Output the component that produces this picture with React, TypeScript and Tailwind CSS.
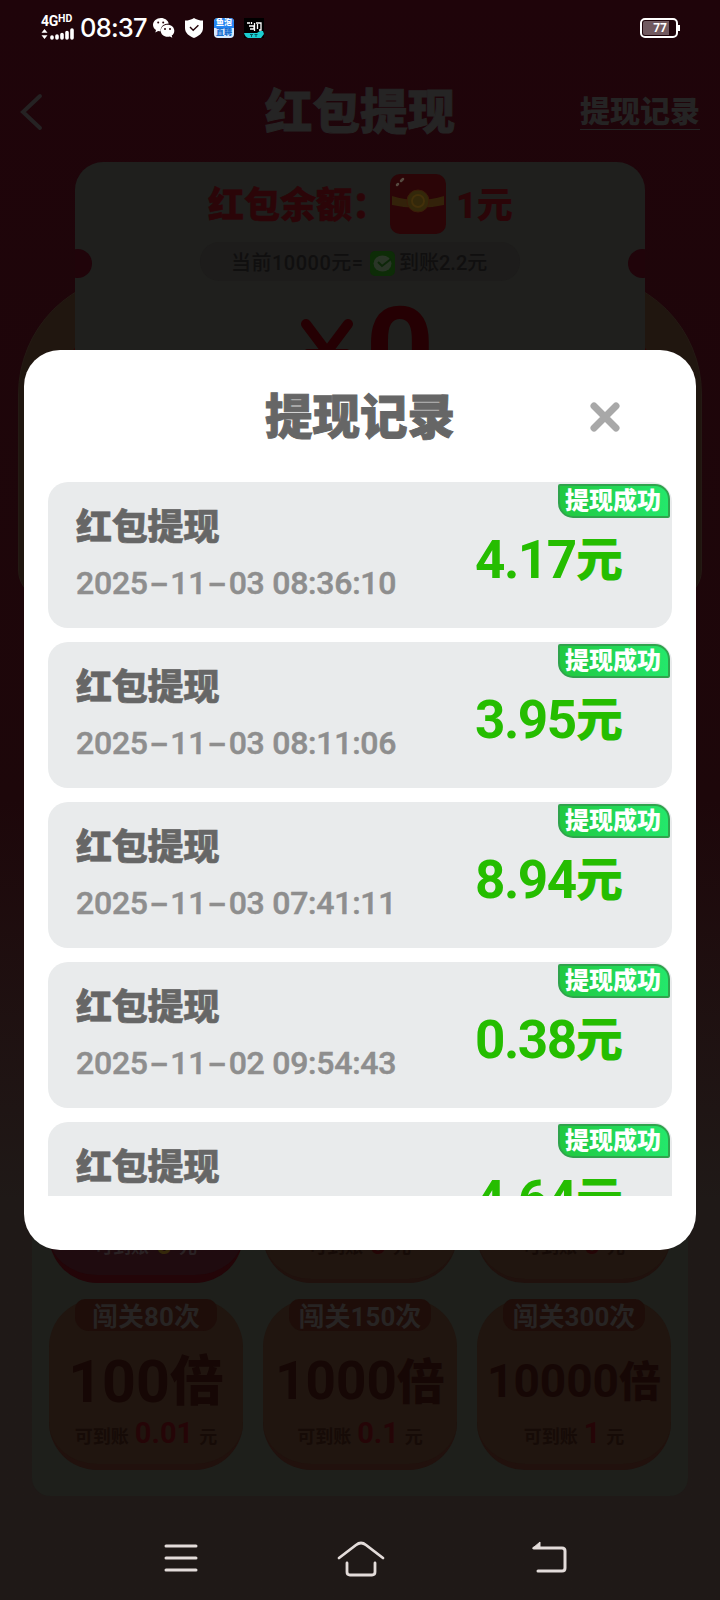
import React from "react";

const font = "font-['Roboto','Noto_Sans_CJK_SC',sans-serif]";

const records = [
  { time: ["2025", "11", "03 08:36:10"], amount: "4.17" },
  { time: ["2025", "11", "03 08:11:06"], amount: "3.95" },
  { time: ["2025", "11", "03 07:41:11"], amount: "8.94" },
  { time: ["2025", "11", "02 09:54:43"], amount: "0.38" },
  { time: ["2025", "11", "02 09:31:25"], amount: "4.64" },
];

const levels = [
  { tab: "闯关80次", times: "100", size: "text-[59px]", cjk: "text-[54px]", value: "0.01" },
  { tab: "闯关150次", times: "1000", size: "text-[53px]", cjk: "text-[48px]", value: "0.1" },
  { tab: "闯关300次", times: "10000", size: "text-[46px]", cjk: "text-[42px]", value: "1" },
];

function Dash() {
  return <span className="inline-block w-[22.5px] scale-x-[1.75] text-center tracking-normal">-</span>;
}

function StatusBar() {
  return (
    <div className="flex h-[56px] items-center pl-[41px] pr-[40px] text-white">
      <div className="flex w-[34px] flex-col">
        <div className="flex h-[11px] items-center text-[14px] font-bold leading-none tracking-[-0.3px]">
          4G<span className="mb-[3px] text-[10.500px] tracking-normal">HD</span>
        </div>
        <svg width="33" height="13" viewBox="0 0 33 13" className="mt-px">
          <path d="M.5 4.800 3.500 1l3 3.800zM.5 7.300h6l-3 3.700z" fill="#fff" />
          <path d="M11 10V9M16 10V8M21 10V6.500M26 10V4.500M31 10V2" stroke="#fff" strokeWidth="3.600" strokeLinecap="round" />
        </svg>
      </div>
      <span className="ml-[5px] w-[67px] whitespace-nowrap font-['Inter',sans-serif] text-[25.500px] font-medium leading-none tracking-[-0.800px]">08:37</span>
      <svg width="22" height="20" viewBox="0 0 22 20" className="ml-[6px]">
        <path d="M8 0C3.600 0 0 3 0 6.800 0 9 1.100 10.800 3 12l-.7 2.400 2.800-1.500c.8.2 1.700.3 2.600.3C7.200 8.600 11 5.600 15.800 5.600 15 2.300 11.800 0 8 0z" fill="#fff" />
        <path d="M14.600 6.700c-3.800 0-6.900 2.600-6.900 6s3.100 6 6.900 6c.8 0 1.600-.1 2.300-.3l2.400 1.300-.6-2.100c1.700-1.200 2.600-2.900 2.600-4.900 0-3.400-2.900-6-6.700-6z" fill="#fff" />
        <g fill="#250409"><circle cx="5.200" cy="4.500" r="1" /><circle cx="10.200" cy="4.500" r="1" /><circle cx="12" cy="11" r="1" /><circle cx="17" cy="11" r="1" /></g>
      </svg>
      <svg width="18" height="20" viewBox="0 0 18 20" className="ml-[10px]">
        <path d="M9 0c2 1.500 5.500 2.600 9 2.600V10c0 5-4 8-9 10-5-2-9-5-9-10V2.600C3.500 2.600 7 1.500 9 0z" fill="#fff" />
        <path d="m5 9 3.200 3.300 5.200-5" fill="none" stroke="#250409" strokeWidth="1.400" />
      </svg>
      <div className="ml-[11px] flex h-[20px] w-[20px] flex-col overflow-hidden rounded-[4px] bg-[#d6eaff] text-center text-[8px] font-black leading-[10px]">
        <span className="h-[10px] bg-[#2384f0] text-white">鱼泡</span>
        <span className="h-[10px] text-[#176ed0]">直聘</span>
      </div>
      <svg width="20" height="20" viewBox="0 0 20 20" className="ml-[10px]">
        <rect width="20" height="20" fill="#000" />
        <path d="M3 5h3M7.500 4v2M5 8h5v3H6M10.500 5v8M12 5h5v7h-2M13.500 6v5" fill="none" stroke="#fff" strokeWidth="1.300" />
        <path d="M0 15h13l3-2h3l1 3-3 4H4q-3-1-4-5z" fill="#1bcdd0" />
        <path d="M6 16.500h3M7.500 16.500V19M10.500 16.500h3M12 16.500V19" stroke="#075a60" />
      </svg>
      <div className="ml-auto flex items-center">
        <div className="flex h-[20px] w-[38px] items-center rounded-[5px] border-2 border-white p-px">
          <div className="flex h-full w-[26px] items-center justify-end rounded-l-[2px] bg-[#715a60] pr-[2px] text-[12px] font-bold text-white">77</div>
        </div>
        <div className="h-[6px] w-[2px] bg-white" />
      </div>
    </div>
  );
}

function Ticket() {
  return (
    <div className="relative mx-auto h-[438px] w-[684px]">
      <div className="absolute inset-x-0 top-[112px] h-[326px] overflow-hidden rounded-t-[120px] rounded-b-[30px] border border-[#241a14] bg-[#20160f]">
        <div className="mx-auto mt-[34px] h-[300px] w-[612px] rounded-t-[100px] bg-[#2d0504]" />
      </div>
      <div className="relative mx-auto flex h-[400px] w-[570px] flex-col items-center overflow-hidden rounded-t-[28px] bg-[#1f1f1d]">
        <div className="absolute left-[-12px] top-[87px] h-[29px] w-[29px] rounded-full bg-[#20040a]" />
        <div className="absolute right-[-12px] top-[87px] h-[29px] w-[29px] rounded-full bg-[#20040a]" />
        <div className="flex h-[80px] w-full items-center pl-[133px] pt-[7px] text-[36px] font-black leading-none text-[#2b0508]">
          <span className="w-[182px] whitespace-nowrap [-webkit-text-stroke:0.5px]">红包余额：</span>
          <svg width="56" height="60" viewBox="0 0 56 60" className="-mt-[3px]">
            <rect width="56" height="60" rx="10" fill="#2b0507" />
            <path d="M2 22q26 8 52 0v9q-26 6-52 0z" fill="#33220a" />
            <circle cx="28" cy="27" r="11" fill="#33280a" stroke="#3b1c09" />
            <circle cx="28" cy="27" r="6" fill="none" stroke="#43300a" strokeWidth="2" />
            <path d="m7 11 1-1m3-3 2-2" stroke="#55493f" strokeWidth="2.500" strokeLinecap="round" />
          </svg>
          <span className="ml-[10px] whitespace-nowrap">1元</span>
        </div>
        <div className="flex h-[39px] w-[320px] items-center rounded-full bg-[#1d1c1b] pl-[31px] pt-[3px] text-[20px] font-medium text-[#100f0f]">
          <span className="w-[139px] whitespace-nowrap tracking-[0.500px]">当前10000元=</span>
          <svg width="25" height="25" viewBox="0 0 25 25">
            <rect width="25" height="25" rx="5" fill="#0d2c07" />
            <ellipse cx="12.500" cy="12.500" rx="9" ry="8" fill="#2a3527" />
            <path d="m8 11 4 4 9-7" fill="none" stroke="#0d2709" strokeWidth="2" />
          </svg>
          <span className="ml-[4px] whitespace-nowrap">到账2.2元</span>
        </div>
        <div className="mt-[14px] flex h-[110px] items-center pl-[14px] text-[#250003]">
          <svg width="54" height="64" viewBox="0 0 54 64" className="mt-[0px]">
            <path d="M6 6l21 28L48 6M8 36h38M27 34v28M8 50h38" fill="none" stroke="#250003" strokeWidth="10" strokeLinecap="round" />
          </svg>
          <span className="ml-[12px] mt-[4px] text-[120px] font-bold leading-none">0</span>
        </div>
      </div>
    </div>
  );
}

function Levels() {
  return (
    <div className="mx-[32px] mt-[508px] flex h-[388px] shrink-0 flex-col rounded-b-[18px] bg-[#1e1f1b] px-[17px]">
      <div className="flex h-[175px] shrink-0 gap-[20px]">
        {["one", "two", "three"].map((key, i) => (
          <div
            key={key}
            className={`flex flex-1 items-end justify-center gap-[7px] rounded-b-[48px] text-[18px] font-bold leading-[22px] ${
              i === 0 ? "border-b-[8px] border-[#230508] bg-[#1f0b0f] pb-[17px] text-[#2a2224]" : "border-b-[4px] border-[#20110d] bg-[#20150f] pb-[21px] text-[#160b07]"
            }`}
          >
            <span>可到账</span>
            <span className={i === 0 ? "text-[28px] leading-[26px] text-[#35280a]" : "text-[28px] leading-[26px] text-[#240506]"}>0</span>
            <span>元</span>
          </div>
        ))}
      </div>
      <div className="mt-[16px] flex gap-[20px]">
        {levels.map((l) => (
          <div key={l.tab} className="flex h-[171px] flex-1 flex-col items-center rounded-[48px] border-b-[6px] border-[#21110d] bg-[#20150f]">
            <div className="flex h-[32px] w-[142px] items-center justify-center whitespace-nowrap rounded-b-[14px] rounded-t-[10px] bg-[#1e0d09] pt-[3px] text-[26px] font-bold leading-none text-[#272423]">
              {l.tab}
            </div>
            <div className={`mt-[20px] flex h-[60px] items-center whitespace-nowrap font-bold leading-none text-[#160705] ${l.size}`}>
              {l.times}
              <span className={`mt-[4px] font-black ${l.cjk}`}>倍</span>
            </div>
            <div className="mt-[9px] flex h-[28px] items-end gap-[6px] text-[18px] font-bold leading-[22px] text-[#160b07]">
              <span>可到账</span>
              <span className="text-[29px] leading-[30px] text-[#250507]">{l.value}</span>
              <span>元</span>
            </div>
          </div>
        ))}
      </div>
    </div>
  );
}

function RecordCard({ time, amount }: { time: string[]; amount: string }) {
  return (
    <div className="flex h-[146px] shrink-0 justify-between rounded-[20px] bg-[#e9ebec]">
      <div className="flex flex-col whitespace-nowrap pl-[28px] pt-[27px]">
        <div className="text-[36px] font-black leading-[38px] tracking-[-0.200px] text-[#666] [-webkit-text-stroke:0.6px]">红包提现</div>
        <div className="mt-[17px] text-[32px] font-medium leading-[38px] tracking-[-0.250px] text-[#8e8e8e] [-webkit-text-stroke:0.5px]">
          {time[0]}<Dash />{time[1]}<Dash />{time[2]}
        </div>
      </div>
      <div className="flex w-[200px] flex-col">
        <div className="ml-auto mr-[2px] mt-[2px] flex h-[34px] w-[112px] items-center justify-center whitespace-nowrap rounded-bl-[15px] rounded-br-[2px] rounded-tl-[2px] rounded-tr-[15px] border-2 border-[#30a34d] bg-linear-to-r from-[#21c83f] to-[#24e86b] pr-[2px] text-[24px] font-black leading-none text-white">
          提现成功
        </div>
        <div className="mt-[14px] flex h-[54px] items-center whitespace-nowrap pl-[3px] text-[53px] font-bold leading-none text-[#25bd00]">
          <span className="mt-[2px] w-[101px] tracking-[-1.500px]">{amount}</span>
          <span className="text-[47px] font-black">元</span>
        </div>
      </div>
    </div>
  );
}

export default function App() {
  return (
    <div className={`relative flex h-[1600px] w-[720px] flex-col overflow-hidden bg-linear-to-b from-[#1f040a] via-[#1d070a] to-[#1f1917] to-75% ${font}`}>
      <StatusBar />
      <div className="flex h-[106px] items-center pl-[20px] pr-[20px] text-[#252424]">
        <svg width="24" height="38" viewBox="0 0 24 38" fill="none" stroke="#252223" strokeWidth="4" strokeLinecap="round" className="mt-[5px]">
          <path d="M20 3 3 19l17 16" />
        </svg>
        <div className="ml-[221px] mt-[10px] w-[190px] whitespace-nowrap text-[47.500px] font-black leading-none [-webkit-text-stroke:1px]">红包提现</div>
        <div className="ml-auto mt-[6px] border-b border-[#252424] text-[30px] font-black leading-[34px]">提现记录</div>
      </div>
      <Ticket />
      <Levels />
      <div className="absolute left-[24px] top-[350px] flex h-[900px] w-[672px] flex-col rounded-[36px] bg-white px-[24px]">
        <div className="flex h-[132px] items-center pl-[217px]">
          <div className="mt-[6px] w-[190px] whitespace-nowrap text-[47.500px] font-black leading-none text-[#666] [-webkit-text-stroke:1px]">提现记录</div>
          <svg width="30" height="30" viewBox="0 0 30 30" className="ml-[135px] mt-[2px]">
            <path d="M4 4l22 22M26 4 4 26" stroke="#a8a8a8" strokeWidth="7" strokeLinecap="round" />
          </svg>
        </div>
        <div className="flex h-[714px] flex-col gap-[14px] overflow-hidden">
          {records.map((r) => (
            <RecordCard key={r.amount} time={r.time} amount={r.amount} />
          ))}
        </div>
      </div>
      <div className="mt-auto flex h-[84px] items-center text-[#e3dcda]">
        <svg width="34" height="28" viewBox="0 0 34 28" className="ml-[164px]" stroke="currentColor" strokeWidth="3" strokeLinecap="round">
          <path d="M2 2h30M2 14h30M2 26h30" />
        </svg>
        <svg width="48" height="42" viewBox="0 0 48 42" className="-mt-[2px] ml-[139px]" fill="none" stroke="currentColor" strokeWidth="2.800" strokeLinecap="round" strokeLinejoin="round">
          <path d="M2 22 19 9q5-4 10 0l17 13M10 27v9q0 3 3 3h22q3 0 3-3v-9" />
        </svg>
        <svg width="36" height="36" viewBox="0 0 36 36" className="ml-[146px]" fill="none" stroke="currentColor" strokeWidth="3" strokeLinecap="round" strokeLinejoin="round">
          <path d="M3 8h28q3 0 3 3v17q0 3-3 3H7" />
          <path d="M2 8 9 2v6z" fill="currentColor" strokeWidth="1" />
        </svg>
      </div>
    </div>
  );
}
